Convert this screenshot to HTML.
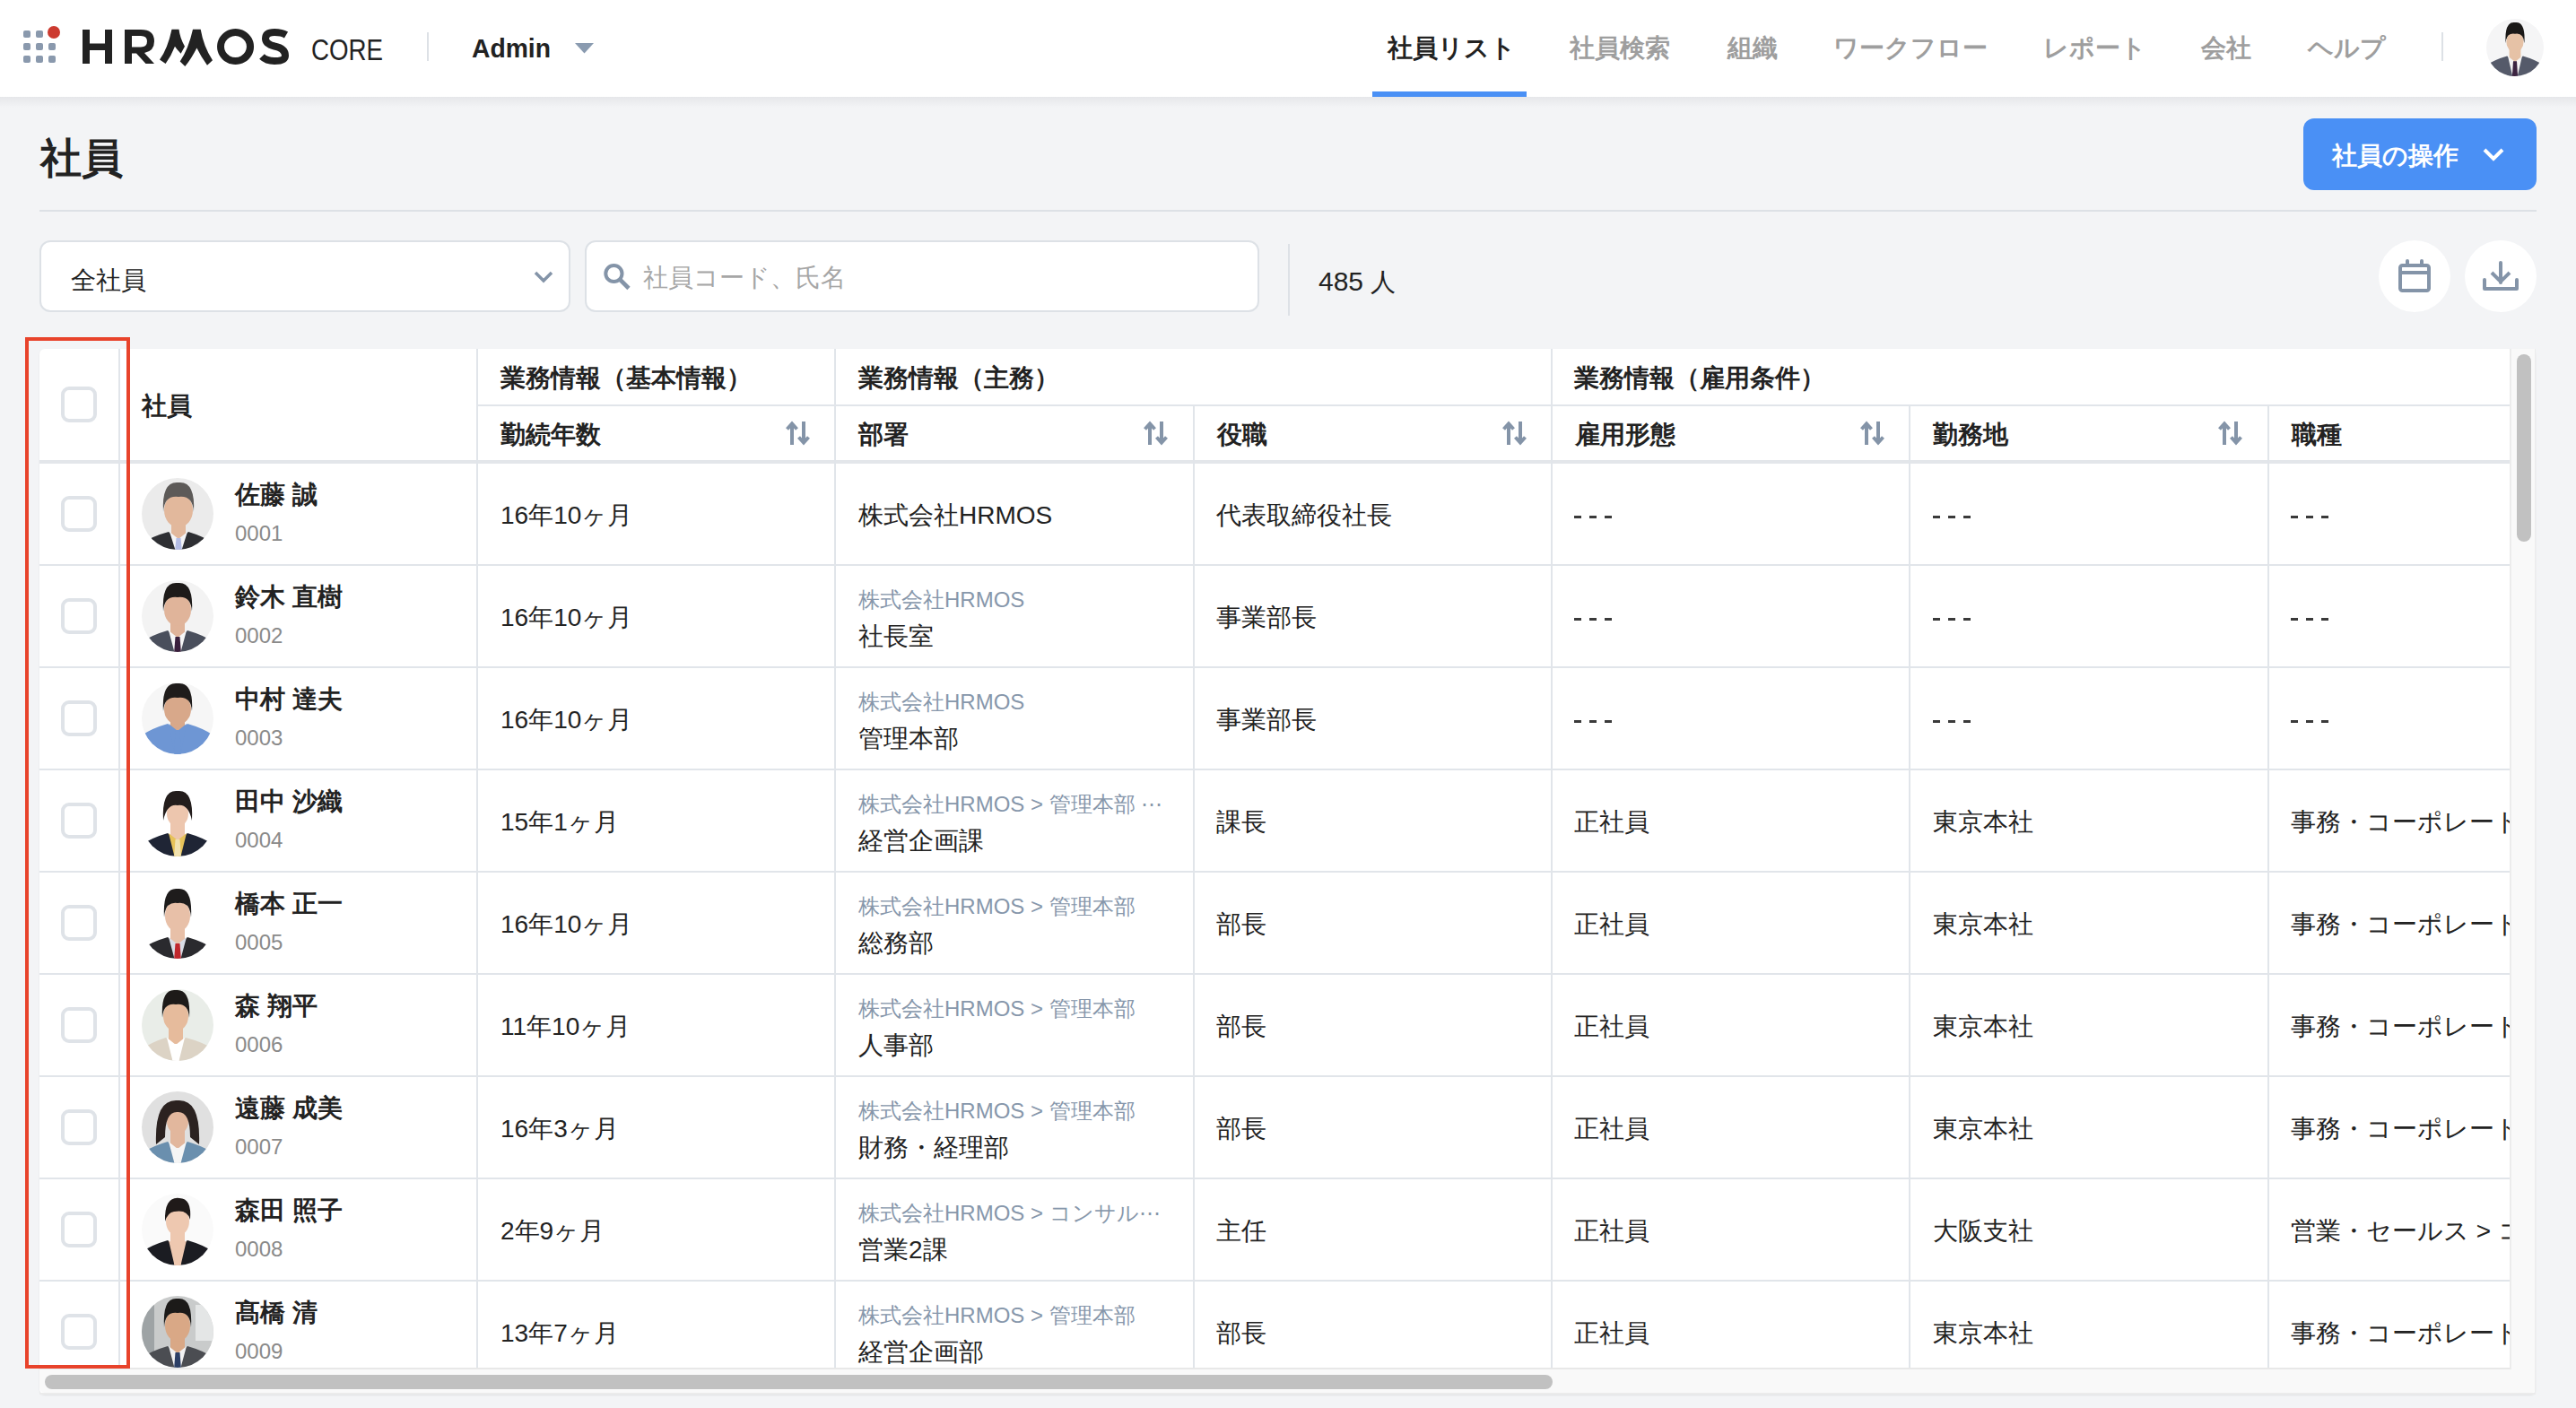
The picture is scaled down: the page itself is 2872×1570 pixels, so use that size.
<!DOCTYPE html>
<html lang="ja"><head><meta charset="utf-8"><title>HRMOS CORE</title>
<style>
html,body{margin:0;padding:0;width:2872px;height:1570px;overflow:hidden;background:#f3f4f6;font-family:"Liberation Sans",sans-serif;color:#222}
div,svg{position:absolute;box-sizing:border-box}
.t28,.t24,.b28,.g24,.id,.nav,.navg{white-space:nowrap}
.t28{font-size:28px;line-height:28px;color:#222}
.b28{font-size:28px;line-height:28px;font-weight:bold;color:#222}
.g24{font-size:24px;line-height:24px;color:#8797ab}
.id{font-size:24px;line-height:24px;color:#8a8a8a}
.nav{font-size:28px;line-height:28px;font-weight:bold;color:#222}
.navg{font-size:28px;line-height:28px;font-weight:bold;color:#9e9e9e}
.dash{width:8px;height:3px;background:#3a3a3a}
.cb{width:40px;height:40px;border:4px solid #dfe3e8;border-radius:9px;background:#fff}
.vl{width:2px;background:#e1e5ea}
.hl{height:2px;background:#e1e5ea}
.ab{position:absolute}
.av{position:absolute}
.b48{font-size:46px;line-height:46px;font-weight:bold;color:#222;white-space:nowrap}
</style></head><body>

<div style="left:0;top:0;width:2872px;height:108px;background:#fff"></div>
<div style="left:0;top:108px;width:2872px;height:12px;background:linear-gradient(#e6e7ea,#f3f4f6)"></div>
<svg style="left:0;top:0" width="700" height="108" viewBox="0 0 700 108">
<rect x="26" y="34" width="8" height="8" rx="2" fill="#8a99ad"/><rect x="40" y="34" width="8" height="8" rx="2" fill="#8a99ad"/><rect x="26" y="48" width="8" height="8" rx="2" fill="#8a99ad"/><rect x="40" y="48" width="8" height="8" rx="2" fill="#8a99ad"/><rect x="54" y="48" width="8" height="8" rx="2" fill="#8a99ad"/><rect x="26" y="62" width="8" height="8" rx="2" fill="#8a99ad"/><rect x="40" y="62" width="8" height="8" rx="2" fill="#8a99ad"/><rect x="54" y="62" width="8" height="8" rx="2" fill="#8a99ad"/><circle cx="60" cy="36" r="7" fill="#cc3a2f"/>
<g fill="#222">
<rect x="92" y="33" width="8" height="38"/><rect x="117" y="33" width="8" height="38"/><rect x="92" y="48.5" width="33" height="7.5"/>
<path d="M139 33 H157 Q172 33 172 46 Q172 57 161 59 L172 71 H162.5 L152 59.5 H147 V71 H139Z M147 40 V52.5 H157 Q164 52.5 164 46 Q164 40 157 40Z" fill-rule="evenodd"/>
<path d="M178 66.6 Q187 54 191.5 32.7 H199.5 Q200.5 42 206 51.7 L201.6 59.75 Q197 55 195 51.7 Q191 62 184.6 71Z"/>
<path d="M200.7 68.4 Q210 55 215 32.7 H223.7 Q227 52 237 67.2 L231 72.8 Q224 63 219.4 53.5 Q213 66 206.3 74Z"/>
<path d="M262.5 32 A20.5 20 0 1 0 262.6 32Z M262.5 40 A12.5 12 0 1 1 262.4 40Z" fill-rule="evenodd"/>
</g>
<path d="M319 39 Q314 36 306 36 Q296 36 296 43 Q296 49 306 51.5 Q318 54 318 62 Q318 68 306 68 Q297 68 292 63" fill="none" stroke="#222" stroke-width="8"/>
<text x="347" y="66.5" font-family="Liberation Sans" font-size="34" fill="#222" textLength="80" lengthAdjust="spacingAndGlyphs">CORE</text>
<rect x="476" y="36" width="2" height="32" fill="#dde1e6"/>
<text x="526" y="64" font-family="Liberation Sans" font-size="30" font-weight="bold" fill="#222" textLength="88" lengthAdjust="spacingAndGlyphs">Admin</text>
<path d="M641 48 H662 L651.5 59.5Z" fill="#8a9bb0"/>
</svg>
<div class="nav" style="left:1547px;top:40px">社員リスト</div>
<div class="navg" style="left:1750px;top:40px">社員検索</div>
<div class="navg" style="left:1926px;top:40px">組織</div>
<div class="navg" style="left:2044px;top:40px">ワークフロー</div>
<div class="navg" style="left:2278px;top:40px">レポート</div>
<div class="navg" style="left:2454px;top:40px">会社</div>
<div class="navg" style="left:2573px;top:40px">ヘルプ</div>
<div style="left:1530px;top:102px;width:172px;height:6px;background:#4a90f5"></div>
<div style="left:2722px;top:36px;width:2px;height:32px;background:#dde1e6"></div>
<svg class="av" style="left:2772px;top:21px" width="64" height="64" viewBox="0 0 80 80"><defs><clipPath id="chd"><circle cx="40" cy="40" r="40"/></clipPath></defs><g clip-path="url(#chd)"><rect width="80" height="80" fill="#f5f5f6"/><rect x="32" y="40" width="16" height="22" fill="#e6c2a6"/><path d="M-4 84 L-4 68 Q8 58 29 52 L40 62 L51 52 Q72 58 84 68 L84 84Z" fill="#555a6a"/><path d="M30 52 L37 82 L43 82 L50 52 L40 60Z" fill="#f4f4f4"/><path d="M37.5 59 L42.5 59 L44 82 L36 82Z" fill="#3b2340"/><ellipse cx="40" cy="32" rx="12" ry="15" fill="#e6c2a6"/><path d="M27 34 Q25 3 40 5 Q55 3 53 34 Q52 19 40 21 Q28 19 27 34Z" fill="#1b1918"/></g></svg>
<div class="b48"  style="left:45px;top:153px">社員</div>
<div style="left:44px;top:234px;width:2784px;height:2px;background:#dde1e6"></div>
<div style="left:2568px;top:132px;width:260px;height:80px;background:#4a90f5;border-radius:12px"></div>
<div class="b28" style="left:2600px;top:160px;color:#fff">社員の操作</div>
<svg style="left:2766px;top:162px" width="28" height="22" viewBox="0 0 28 22"><path d="M4 5 L14 15 L24 5" stroke="#fff" stroke-width="4" fill="none"/></svg>
<div style="left:44px;top:268px;width:592px;height:80px;background:#fff;border:2px solid #dde1e6;border-radius:12px"></div>
<div class="t28" style="left:79px;top:299px">全社員</div>
<svg style="left:592px;top:298px" width="28" height="20" viewBox="0 0 28 20"><path d="M5 6 L14 15 L23 6" stroke="#8494a8" stroke-width="3.5" fill="none"/></svg>
<div style="left:652px;top:268px;width:752px;height:80px;background:#fff;border:2px solid #dde1e6;border-radius:12px"></div>
<svg style="left:670px;top:292px" width="36" height="34" viewBox="0 0 36 34"><circle cx="14.4" cy="13" r="9.1" stroke="#8494a8" stroke-width="4" fill="none"/><path d="M20.5 19 L31 29.5" stroke="#8494a8" stroke-width="4.6"/></svg>
<div class="t28" style="left:717px;top:296px;color:#a6a6a6">社員コード、氏名</div>
<div style="left:1436px;top:272px;width:2px;height:80px;background:#dde1e6"></div>
<div style="left:1470px;top:299px;font-size:30px;line-height:30px;white-space:nowrap;color:#222">485 <span style="font-size:28px">人</span></div>
<div style="left:2652px;top:268px;width:80px;height:80px;border-radius:40px;background:#fff"></div>
<div style="left:2748px;top:268px;width:80px;height:80px;border-radius:40px;background:#fff"></div>
<svg style="left:2672px;top:286px" width="40" height="42" viewBox="0 0 40 42"><rect x="4" y="10" width="32" height="28" rx="2.5" stroke="#8494a8" stroke-width="4" fill="none"/><path d="M4 18 H36" stroke="#8494a8" stroke-width="4"/><path d="M12 5 V10 M28 5 V10" stroke="#8494a8" stroke-width="4" stroke-linecap="round"/></svg>
<svg style="left:2766px;top:288px" width="44" height="40" viewBox="0 0 44 40"><path d="M4 24 V34 H40 V24" stroke="#8494a8" stroke-width="4" fill="none" stroke-linecap="round" stroke-linejoin="round"/><path d="M22 5 V27" stroke="#8494a8" stroke-width="4" stroke-linecap="round"/><path d="M12 16 L22 26 L32 16" stroke="#8494a8" stroke-width="4" fill="none"/></svg>
<div style="left:44px;top:389px;width:2783px;height:1166px;background:#fff;border-radius:6px;box-shadow:0 1px 2px rgba(0,0,0,0.08)"></div>
<div style="left:44px;top:1525px;width:2756px;height:2px;background:#e8e8e8"></div>
<div style="left:44px;top:1527px;width:2782px;height:26px;background:#f9f9f9;border-radius:0 0 4px 6px"></div>
<div style="left:44px;top:1553px;width:2782px;height:2px;background:#ebebeb"></div>
<div style="left:2798px;top:389px;width:2px;height:1138px;background:#ececec"></div>
<div style="left:2800px;top:389px;width:26px;height:1138px;background:#f9f9f9"></div>
<div style="left:2826px;top:389px;width:1px;height:1166px;background:#ececec"></div>
<div style="left:50px;top:1533px;width:1681px;height:16px;background:#c1c1c1;border-radius:8px"></div>
<div style="left:2806px;top:395px;width:16px;height:209px;background:#c1c1c1;border-radius:8px"></div>
<div style="left:44px;top:389px;width:2754px;height:1136px;overflow:hidden">
<div class="hl" style="left:489px;top:62px;width:2265px"></div>
<div style="left:0;top:124px;width:2754px;height:4px;background:#e3e6ea"></div>
<div class="vl" style="left:88px;top:0;height:1136px"></div>
<div class="vl" style="left:487px;top:0;height:1136px"></div>
<div class="vl" style="left:886px;top:0;height:1136px"></div>
<div class="vl" style="left:1685px;top:0;height:1136px"></div>
<div class="vl" style="left:1286px;top:64px;height:1072px"></div>
<div class="vl" style="left:2084px;top:64px;height:1072px"></div>
<div class="vl" style="left:2484px;top:64px;height:1072px"></div>
<div class="cb" style="left:24px;top:42px"></div>
<div class="b28" style="left:114px;top:50px">社員</div>
<div class="b28" style="left:514px;top:19px">業務情報（基本情報）</div>
<div class="b28" style="left:913px;top:19px">業務情報（主務）</div>
<div class="b28" style="left:1711px;top:19px">業務情報（雇用条件）</div>
<div class="b28" style="left:514px;top:82px">勤続年数</div>
<svg class="ab" style="left:832px;top:80px" width="28" height="28" viewBox="0 0 28 28"><path d="M7 27 V4 M1.5 9.5 L7 3.5 L12.5 9.5" stroke="#8494a8" stroke-width="4" fill="none" stroke-linejoin="miter"/><path d="M20 1 V24 M14.5 18.5 L20 24.5 L25.5 18.5" stroke="#8494a8" stroke-width="4" fill="none"/></svg>
<div class="b28" style="left:913px;top:82px">部署</div>
<svg class="ab" style="left:1231px;top:80px" width="28" height="28" viewBox="0 0 28 28"><path d="M7 27 V4 M1.5 9.5 L7 3.5 L12.5 9.5" stroke="#8494a8" stroke-width="4" fill="none" stroke-linejoin="miter"/><path d="M20 1 V24 M14.5 18.5 L20 24.5 L25.5 18.5" stroke="#8494a8" stroke-width="4" fill="none"/></svg>
<div class="b28" style="left:1313px;top:82px">役職</div>
<svg class="ab" style="left:1631px;top:80px" width="28" height="28" viewBox="0 0 28 28"><path d="M7 27 V4 M1.5 9.5 L7 3.5 L12.5 9.5" stroke="#8494a8" stroke-width="4" fill="none" stroke-linejoin="miter"/><path d="M20 1 V24 M14.5 18.5 L20 24.5 L25.5 18.5" stroke="#8494a8" stroke-width="4" fill="none"/></svg>
<div class="b28" style="left:1712px;top:82px">雇用形態</div>
<svg class="ab" style="left:2030px;top:80px" width="28" height="28" viewBox="0 0 28 28"><path d="M7 27 V4 M1.5 9.5 L7 3.5 L12.5 9.5" stroke="#8494a8" stroke-width="4" fill="none" stroke-linejoin="miter"/><path d="M20 1 V24 M14.5 18.5 L20 24.5 L25.5 18.5" stroke="#8494a8" stroke-width="4" fill="none"/></svg>
<div class="b28" style="left:2111px;top:82px">勤務地</div>
<svg class="ab" style="left:2429px;top:80px" width="28" height="28" viewBox="0 0 28 28"><path d="M7 27 V4 M1.5 9.5 L7 3.5 L12.5 9.5" stroke="#8494a8" stroke-width="4" fill="none" stroke-linejoin="miter"/><path d="M20 1 V24 M14.5 18.5 L20 24.5 L25.5 18.5" stroke="#8494a8" stroke-width="4" fill="none"/></svg>
<div class="b28" style="left:2511px;top:82px">職種</div>
<div class="hl" style="left:0;top:240px;width:2754px"></div>
<div class="cb" style="left:24px;top:164px"></div>
<svg class="av" style="left:114px;top:144px" width="80" height="80" viewBox="0 0 80 80"><defs><clipPath id="cr0"><circle cx="40" cy="40" r="40"/></clipPath></defs><g clip-path="url(#cr0)"><rect width="80" height="80" fill="#ebebeb"/><rect x="33" y="44" width="16" height="26" fill="#e2b89c"/><path d="M-4 84 L-4 76 Q8 66 30 60 L41 70 L52 60 Q72 66 84 76 L84 84Z" fill="#2e2f33"/><path d="M31 60 L38 82 L44 82 L51 60 L41 68Z" fill="#f4f4f6"/><path d="M38.5 67 L43.5 67 L45 82 L37 82Z" fill="#b4bde6"/><ellipse cx="41" cy="36" rx="16" ry="19" fill="#e2b89c"/><path d="M24 38 Q22 3 41 5 Q60 3 58 38 Q57 19 41 21 Q25 19 24 38Z" fill="#5d5a58"/></g></svg>
<div class="b28" style="left:218px;top:149px">佐藤 誠</div>
<div class="id" style="left:218px;top:194px">0001</div>
<div class="t28" style="left:514px;top:172px">16年10ヶ月</div>
<div class="t28" style="left:913px;top:172px">株式会社HRMOS</div>
<div class="t28" style="left:1312px;top:172px">代表取締役社長</div>
<div class="dash" style="left:1711px;top:186px"></div><div class="dash" style="left:1728px;top:186px"></div><div class="dash" style="left:1745px;top:186px"></div>
<div class="dash" style="left:2111px;top:186px"></div><div class="dash" style="left:2128px;top:186px"></div><div class="dash" style="left:2145px;top:186px"></div>
<div class="dash" style="left:2510px;top:186px"></div><div class="dash" style="left:2527px;top:186px"></div><div class="dash" style="left:2544px;top:186px"></div>
<div class="hl" style="left:0;top:354px;width:2754px"></div>
<div class="cb" style="left:24px;top:278px"></div>
<svg class="av" style="left:114px;top:258px" width="80" height="80" viewBox="0 0 80 80"><defs><clipPath id="cr1"><circle cx="40" cy="40" r="40"/></clipPath></defs><g clip-path="url(#cr1)"><rect width="80" height="80" fill="#f3f3f3"/><rect x="32" y="41" width="16" height="25" fill="#e0b49a"/><path d="M-4 84 L-4 72 Q8 62 29 56 L40 66 L51 56 Q72 62 84 72 L84 84Z" fill="#4a4f5c"/><path d="M30 56 L37 82 L43 82 L50 56 L40 64Z" fill="#f6f6f6"/><path d="M37.5 63 L42.5 63 L44 82 L36 82Z" fill="#3a1f3c"/><ellipse cx="40" cy="33" rx="15" ry="18" fill="#e0b49a"/><path d="M24 35 Q22 1 40 3 Q58 1 56 35 Q55 17 40 19 Q25 17 24 35Z" fill="#1d1a19"/></g></svg>
<div class="b28" style="left:218px;top:263px">鈴木 直樹</div>
<div class="id" style="left:218px;top:308px">0002</div>
<div class="t28" style="left:514px;top:286px">16年10ヶ月</div>
<div class="g24" style="left:913px;top:268px">株式会社HRMOS</div>
<div class="t28" style="left:913px;top:307px">社長室</div>
<div class="t28" style="left:1312px;top:286px">事業部長</div>
<div class="dash" style="left:1711px;top:300px"></div><div class="dash" style="left:1728px;top:300px"></div><div class="dash" style="left:1745px;top:300px"></div>
<div class="dash" style="left:2111px;top:300px"></div><div class="dash" style="left:2128px;top:300px"></div><div class="dash" style="left:2145px;top:300px"></div>
<div class="dash" style="left:2510px;top:300px"></div><div class="dash" style="left:2527px;top:300px"></div><div class="dash" style="left:2544px;top:300px"></div>
<div class="hl" style="left:0;top:468px;width:2754px"></div>
<div class="cb" style="left:24px;top:392px"></div>
<svg class="av" style="left:114px;top:372px" width="80" height="80" viewBox="0 0 80 80"><defs><clipPath id="cr2"><circle cx="40" cy="40" r="40"/></clipPath></defs><g clip-path="url(#cr2)"><rect width="80" height="80" fill="#f6f6f6"/><rect x="32" y="38" width="16" height="18" fill="#d8a88a"/><path d="M-4 84 L-4 62 Q8 52 29 46 L40 56 L51 46 Q72 52 84 62 L84 84Z" fill="#6e96d4"/><path d="M30 46 L37 82 L43 82 L50 46 L40 54Z" fill="#6e96d4"/><path d="M37.5 53 L42.5 53 L44 82 L36 82Z" fill="#6e96d4"/><ellipse cx="40" cy="30" rx="15" ry="17" fill="#d8a88a"/><path d="M24 32 Q22 -1 40 1 Q58 -1 56 32 Q55 15 40 17 Q25 15 24 32Z" fill="#1f1c1b"/></g></svg>
<div class="b28" style="left:218px;top:377px">中村 達夫</div>
<div class="id" style="left:218px;top:422px">0003</div>
<div class="t28" style="left:514px;top:400px">16年10ヶ月</div>
<div class="g24" style="left:913px;top:382px">株式会社HRMOS</div>
<div class="t28" style="left:913px;top:421px">管理本部</div>
<div class="t28" style="left:1312px;top:400px">事業部長</div>
<div class="dash" style="left:1711px;top:414px"></div><div class="dash" style="left:1728px;top:414px"></div><div class="dash" style="left:1745px;top:414px"></div>
<div class="dash" style="left:2111px;top:414px"></div><div class="dash" style="left:2128px;top:414px"></div><div class="dash" style="left:2145px;top:414px"></div>
<div class="dash" style="left:2510px;top:414px"></div><div class="dash" style="left:2527px;top:414px"></div><div class="dash" style="left:2544px;top:414px"></div>
<div class="hl" style="left:0;top:582px;width:2754px"></div>
<div class="cb" style="left:24px;top:506px"></div>
<svg class="av" style="left:114px;top:486px" width="80" height="80" viewBox="0 0 80 80"><defs><clipPath id="cr3"><circle cx="40" cy="40" r="40"/></clipPath></defs><g clip-path="url(#cr3)"><rect width="80" height="80" fill="#ffffff"/><rect x="32" y="40" width="16" height="24" fill="#edc6ae"/><path d="M-4 84 L-4 70 Q8 60 29 54 L40 64 L51 54 Q72 60 84 70 L84 84Z" fill="#1f2535"/><path d="M30 54 L37 82 L43 82 L50 54 L40 62Z" fill="#e7c35a"/><path d="M37.5 61 L42.5 61 L44 82 L36 82Z" fill="#f1e2b0"/><ellipse cx="40" cy="32" rx="12" ry="15" fill="#edc6ae"/><path d="M24 40 Q22 5 40 7 Q58 5 56 40 Q52 21 40 23 Q28 21 24 40Z" fill="#231d1c"/></g></svg>
<div class="b28" style="left:218px;top:491px">田中 沙織</div>
<div class="id" style="left:218px;top:536px">0004</div>
<div class="t28" style="left:514px;top:514px">15年1ヶ月</div>
<div class="g24" style="left:913px;top:496px">株式会社HRMOS > 管理本部 ⋯</div>
<div class="t28" style="left:913px;top:535px">経営企画課</div>
<div class="t28" style="left:1312px;top:514px">課長</div>
<div class="t28" style="left:1711px;top:514px">正社員</div>
<div class="t28" style="left:2111px;top:514px">東京本社</div>
<div class="t28" style="left:2510px;top:514px">事務・コーポレート</div>
<div class="hl" style="left:0;top:696px;width:2754px"></div>
<div class="cb" style="left:24px;top:620px"></div>
<svg class="av" style="left:114px;top:600px" width="80" height="80" viewBox="0 0 80 80"><defs><clipPath id="cr4"><circle cx="40" cy="40" r="40"/></clipPath></defs><g clip-path="url(#cr4)"><rect width="80" height="80" fill="#ffffff"/><rect x="32" y="40" width="16" height="26" fill="#e8c0a8"/><path d="M-4 84 L-4 72 Q8 62 29 56 L40 66 L51 56 Q72 62 84 72 L84 84Z" fill="#2a2a2e"/><path d="M30 56 L37 82 L43 82 L50 56 L40 64Z" fill="#d9dde6"/><path d="M37.5 63 L42.5 63 L44 82 L36 82Z" fill="#c0272d"/><ellipse cx="40" cy="32" rx="14" ry="18" fill="#e8c0a8"/><path d="M25 34 Q23 0 40 2 Q57 0 55 34 Q54 16 40 18 Q26 16 25 34Z" fill="#1e1c1c"/></g></svg>
<div class="b28" style="left:218px;top:605px">橋本 正一</div>
<div class="id" style="left:218px;top:650px">0005</div>
<div class="t28" style="left:514px;top:628px">16年10ヶ月</div>
<div class="g24" style="left:913px;top:610px">株式会社HRMOS > 管理本部</div>
<div class="t28" style="left:913px;top:649px">総務部</div>
<div class="t28" style="left:1312px;top:628px">部長</div>
<div class="t28" style="left:1711px;top:628px">正社員</div>
<div class="t28" style="left:2111px;top:628px">東京本社</div>
<div class="t28" style="left:2510px;top:628px">事務・コーポレート</div>
<div class="hl" style="left:0;top:810px;width:2754px"></div>
<div class="cb" style="left:24px;top:734px"></div>
<svg class="av" style="left:114px;top:714px" width="80" height="80" viewBox="0 0 80 80"><defs><clipPath id="cr5"><circle cx="40" cy="40" r="40"/></clipPath></defs><g clip-path="url(#cr5)"><rect width="80" height="80" fill="#e9ede8"/><rect x="30" y="38" width="16" height="26" fill="#e6bb9c"/><path d="M-4 84 L-4 70 Q8 60 27 54 L38 64 L49 54 Q72 60 84 70 L84 84Z" fill="#dcd3c5"/><path d="M28 54 L35 82 L41 82 L48 54 L38 62Z" fill="#ffffff"/><path d="M35.5 61 L40.5 61 L42 82 L34 82Z" fill="#ffffff"/><ellipse cx="38" cy="30" rx="14" ry="17" fill="#e6bb9c"/><path d="M23 32 Q21 -1 38 1 Q55 -1 53 32 Q52 15 38 17 Q24 15 23 32Z" fill="#1d1a18"/></g></svg>
<div class="b28" style="left:218px;top:719px">森 翔平</div>
<div class="id" style="left:218px;top:764px">0006</div>
<div class="t28" style="left:514px;top:742px">11年10ヶ月</div>
<div class="g24" style="left:913px;top:724px">株式会社HRMOS > 管理本部</div>
<div class="t28" style="left:913px;top:763px">人事部</div>
<div class="t28" style="left:1312px;top:742px">部長</div>
<div class="t28" style="left:1711px;top:742px">正社員</div>
<div class="t28" style="left:2111px;top:742px">東京本社</div>
<div class="t28" style="left:2510px;top:742px">事務・コーポレート</div>
<div class="hl" style="left:0;top:924px;width:2754px"></div>
<div class="cb" style="left:24px;top:848px"></div>
<svg class="av" style="left:114px;top:828px" width="80" height="80" viewBox="0 0 80 80"><defs><clipPath id="cr6"><circle cx="40" cy="40" r="40"/></clipPath></defs><g clip-path="url(#cr6)"><rect width="80" height="80" fill="#e0e0e0"/><rect x="32" y="41" width="16" height="25" fill="#e2b79d"/><path d="M-4 84 L-4 72 Q8 62 29 56 L40 66 L51 56 Q72 62 84 72 L84 84Z" fill="#6a8fae"/><path d="M30 56 L37 82 L43 82 L50 56 L40 64Z" fill="#f5f5f5"/><path d="M37.5 63 L42.5 63 L44 82 L36 82Z" fill="#f5f5f5"/><ellipse cx="40" cy="33" rx="12" ry="15" fill="#e2b79d"/><path d="M16 59 Q14 8 40 10 Q66 8 64 59 L54 51 Q54 22 40 23 Q26 22 26 51Z" fill="#2b2220"/></g></svg>
<div class="b28" style="left:218px;top:833px">遠藤 成美</div>
<div class="id" style="left:218px;top:878px">0007</div>
<div class="t28" style="left:514px;top:856px">16年3ヶ月</div>
<div class="g24" style="left:913px;top:838px">株式会社HRMOS > 管理本部</div>
<div class="t28" style="left:913px;top:877px">財務・経理部</div>
<div class="t28" style="left:1312px;top:856px">部長</div>
<div class="t28" style="left:1711px;top:856px">正社員</div>
<div class="t28" style="left:2111px;top:856px">東京本社</div>
<div class="t28" style="left:2510px;top:856px">事務・コーポレート</div>
<div class="hl" style="left:0;top:1038px;width:2754px"></div>
<div class="cb" style="left:24px;top:962px"></div>
<svg class="av" style="left:114px;top:942px" width="80" height="80" viewBox="0 0 80 80"><defs><clipPath id="cr7"><circle cx="40" cy="40" r="40"/></clipPath></defs><g clip-path="url(#cr7)"><rect width="80" height="80" fill="#fafafa"/><rect x="32" y="39" width="16" height="23" fill="#eec8b0"/><path d="M-4 84 L-4 68 Q8 58 29 52 L40 62 L51 52 Q72 58 84 68 L84 84Z" fill="#1b1c22"/><path d="M30 52 L37 82 L43 82 L50 52 L40 60Z" fill="#eec8b0"/><path d="M37.5 59 L42.5 59 L44 82 L36 82Z" fill="#eec8b0"/><ellipse cx="40" cy="31" rx="13" ry="16" fill="#eec8b0"/><path d="M26 31 Q25 3 42 5 Q56 5 54 29 Q51 17 36 20 Q29 21 26 31Z" fill="#1f1a19"/></g></svg>
<div class="b28" style="left:218px;top:947px">森田 照子</div>
<div class="id" style="left:218px;top:992px">0008</div>
<div class="t28" style="left:514px;top:970px">2年9ヶ月</div>
<div class="g24" style="left:913px;top:952px">株式会社HRMOS > コンサル⋯</div>
<div class="t28" style="left:913px;top:991px">営業2課</div>
<div class="t28" style="left:1312px;top:970px">主任</div>
<div class="t28" style="left:1711px;top:970px">正社員</div>
<div class="t28" style="left:2111px;top:970px">大阪支社</div>
<div class="t28" style="left:2510px;top:970px">営業・セールス > コンサル</div>
<div class="hl" style="left:0;top:1152px;width:2754px"></div>
<div class="cb" style="left:24px;top:1076px"></div>
<svg class="av" style="left:114px;top:1056px" width="80" height="80" viewBox="0 0 80 80"><defs><clipPath id="cr8"><circle cx="40" cy="40" r="40"/></clipPath></defs><g clip-path="url(#cr8)"><rect width="80" height="80" fill="#c9cbcb"/><rect x="0" y="0" width="14" height="80" fill="#9ea3a5"/><rect x="60" y="10" width="20" height="40" fill="#e4e6e6"/><rect x="32" y="41" width="16" height="25" fill="#d9a886"/><path d="M-4 84 L-4 72 Q8 62 29 56 L40 66 L51 56 Q72 62 84 72 L84 84Z" fill="#4b4d52"/><path d="M30 56 L37 82 L43 82 L50 56 L40 64Z" fill="#f2f2f2"/><path d="M37.5 63 L42.5 63 L44 82 L36 82Z" fill="#2c3f66"/><ellipse cx="40" cy="33" rx="14" ry="18" fill="#d9a886"/><path d="M25 35 Q23 1 40 3 Q57 1 55 35 Q54 17 40 19 Q26 17 25 35Z" fill="#1c1a19"/></g></svg>
<div class="b28" style="left:218px;top:1061px">髙橋 清</div>
<div class="id" style="left:218px;top:1106px">0009</div>
<div class="t28" style="left:514px;top:1084px">13年7ヶ月</div>
<div class="g24" style="left:913px;top:1066px">株式会社HRMOS > 管理本部</div>
<div class="t28" style="left:913px;top:1105px">経営企画部</div>
<div class="t28" style="left:1312px;top:1084px">部長</div>
<div class="t28" style="left:1711px;top:1084px">正社員</div>
<div class="t28" style="left:2111px;top:1084px">東京本社</div>
<div class="t28" style="left:2510px;top:1084px">事務・コーポレート</div>
</div>
<div style="left:28px;top:376px;width:117px;height:1150px;border:4px solid #e8432b"></div>
</body></html>
